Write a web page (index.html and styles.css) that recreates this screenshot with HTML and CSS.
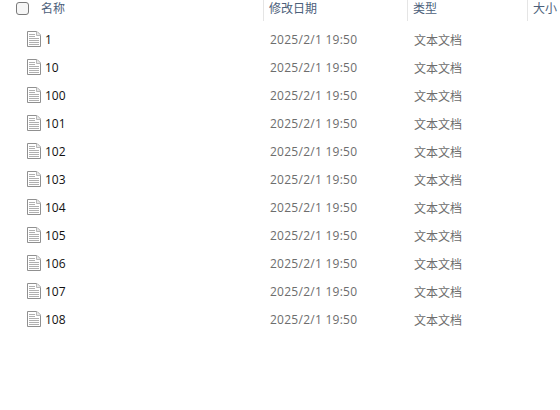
FILE: index.html
```html
<!DOCTYPE html>
<html lang="zh-CN">
<head>
<meta charset="utf-8">
<title>文件列表</title>
<link rel="stylesheet" href="styles.css">
</head>
<body>
<svg class="defs" width="0" height="0" aria-hidden="true">
  <symbol id="doc" viewBox="0 0 16 16">
    <path d="M1.5.5H11L14.5 4V15.5H1.5Z" fill="#fff" stroke="#909090"/>
    <path d="M10.5.5V4.5H14.5" fill="#e8e8e8" stroke="#b8b8b8"/>
    <path d="M3 3.5H9M3 5.5H9M3 7.5H13M3 9.5H13M3 11.5H13M3 13.5H13" stroke="#b0b0b0" fill="none"/>
  </symbol>
</svg>
<header class="head">
  <div class="col col-name"><span class="check"></span><span class="label">名称</span></div>
  <div class="col col-date"><span class="label">修改日期</span></div>
  <div class="col col-type"><span class="label">类型</span></div>
  <div class="col col-size"><span class="label">大小</span></div>
</header>
<main class="list">
  <div class="row"><div class="name"><svg class="icon"><use href="#doc"/></svg>1</div><div class="date">2025/2/1 19:50</div><div class="type">文本文档</div></div>
  <div class="row"><div class="name"><svg class="icon"><use href="#doc"/></svg>10</div><div class="date">2025/2/1 19:50</div><div class="type">文本文档</div></div>
  <div class="row"><div class="name"><svg class="icon"><use href="#doc"/></svg>100</div><div class="date">2025/2/1 19:50</div><div class="type">文本文档</div></div>
  <div class="row"><div class="name"><svg class="icon"><use href="#doc"/></svg>101</div><div class="date">2025/2/1 19:50</div><div class="type">文本文档</div></div>
  <div class="row"><div class="name"><svg class="icon"><use href="#doc"/></svg>102</div><div class="date">2025/2/1 19:50</div><div class="type">文本文档</div></div>
  <div class="row"><div class="name"><svg class="icon"><use href="#doc"/></svg>103</div><div class="date">2025/2/1 19:50</div><div class="type">文本文档</div></div>
  <div class="row"><div class="name"><svg class="icon"><use href="#doc"/></svg>104</div><div class="date">2025/2/1 19:50</div><div class="type">文本文档</div></div>
  <div class="row"><div class="name"><svg class="icon"><use href="#doc"/></svg>105</div><div class="date">2025/2/1 19:50</div><div class="type">文本文档</div></div>
  <div class="row"><div class="name"><svg class="icon"><use href="#doc"/></svg>106</div><div class="date">2025/2/1 19:50</div><div class="type">文本文档</div></div>
  <div class="row"><div class="name"><svg class="icon"><use href="#doc"/></svg>107</div><div class="date">2025/2/1 19:50</div><div class="type">文本文档</div></div>
  <div class="row"><div class="name"><svg class="icon"><use href="#doc"/></svg>108</div><div class="date">2025/2/1 19:50</div><div class="type">文本文档</div></div>
</main>
</body>
</html>
```

FILE: styles.css
```css
html, body {
  margin: 0;
  padding: 0;
  background: #fff;
}
body {
  width: 560px;
  height: 410px;
  overflow: hidden;
  font-family: "Noto Sans CJK SC", "Open Sans", sans-serif;
  font-size: 12px;
}
.defs {
  display: block;
  height: 0;
}
.head {
  display: flex;
  height: 21px;
  color: #4c607a;
}
.col {
  display: flex;
  align-items: center;
  height: 21px;
  line-height: 16px;
  padding-bottom: 5px;
  box-sizing: border-box;
  border-right: 1px solid #e5e5e5;
}
.col-name {
  width: 264px;
  padding-left: 16px;
}
.col-date {
  width: 144px;
  padding-left: 5px;
}
.col-type {
  width: 120px;
  padding-left: 5px;
}
.col-size {
  flex: 1;
  padding-left: 5px;
  border-right: 0;
}
.check {
  box-sizing: border-box;
  width: 13px;
  height: 13px;
  background: #f6f6f6;
  border: 1px solid #7a7a7a;
  border-radius: 3px;
  margin-right: 12px;
}
.list {
  display: flex;
  flex-direction: column;
  padding-top: 4px;
}
.row {
  display: flex;
  align-items: center;
  height: 28px;
}
.name {
  display: flex;
  align-items: center;
  width: 270px;
  padding-left: 26px;
  box-sizing: border-box;
  color: #111;
  font-family: "Open Sans", sans-serif;
}
.icon {
  width: 16px;
  height: 16px;
  margin-right: 3px;
}
.date {
  width: 144px;
  color: #6d6d6d;
  font-family: "Open Sans", sans-serif;
  letter-spacing: 0.26px;
}
.type {
  color: #6d6d6d;
}
```
